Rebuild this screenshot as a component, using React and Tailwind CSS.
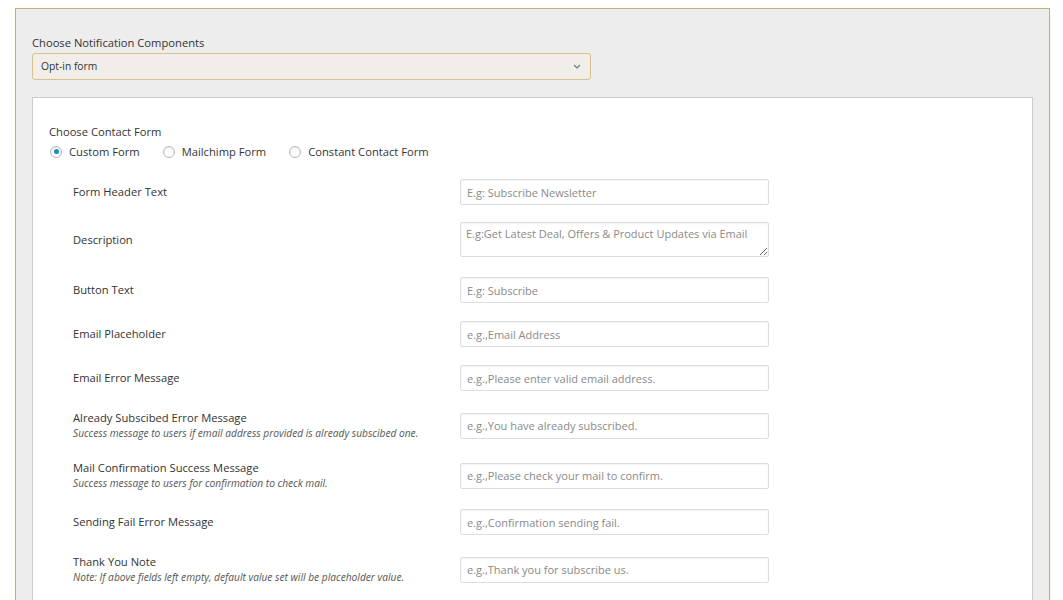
import React from "react";

const rows = [
  { label: "Form Header Text", placeholder: "E.g: Subscribe Newsletter", mt: "mt-[18px]" },
  { label: "Description", placeholder: "E.g:Get Latest Deal, Offers & Product Updates via Email", mt: "mt-[17px]", textarea: true },
  { label: "Button Text", placeholder: "E.g: Subscribe", mt: "mt-[20px]" },
  { label: "Email Placeholder", placeholder: "e.g.,Email Address", mt: "mt-[18px]" },
  { label: "Email Error Message", placeholder: "e.g.,Please enter valid email address.", mt: "mt-[18px]" },
  {
    label: "Already Subscibed Error Message",
    note: "Success message to users if email address provided is already subscibed one.",
    placeholder: "e.g.,You have already subscribed.",
    mt: "mt-[19px]",
  },
  {
    label: "Mail Confirmation Success Message",
    note: "Success message to users for confirmation to check mail.",
    placeholder: "e.g.,Please check your mail to confirm.",
    mt: "mt-[19px]",
  },
  { label: "Sending Fail Error Message", placeholder: "e.g.,Confirmation sending fail.", mt: "mt-[18px]" },
  {
    label: "Thank You Note",
    note: "Note: If above fields left empty, default value set will be placeholder value.",
    placeholder: "e.g.,Thank you for subscribe us.",
    mt: "mt-[19px]",
  },
];

function Radio({ checked, label }) {
  return (
    <label className="flex items-center gap-[7px]">
      <span className="flex h-[12px] w-[12px] items-center justify-center rounded-full border border-[#b4b9be] bg-white shadow-[inset_0_1px_2px_rgba(0,0,0,0.1)]">
        {checked && <span className="h-[5px] w-[5px] rounded-full bg-[#1e8cbe]" />}
      </span>
      <span>{label}</span>
    </label>
  );
}

export default function App() {
  return (
    <div className="min-h-[600px] bg-white pt-2 font-['Open_Sans',sans-serif] text-[#333]">
      <div className="ml-[15px] mr-[13px] border border-[#bfae82] bg-[#ededed] px-[16px] pt-[26px] shadow-[0_0_2px_#fff4d6]">
        {/* notification components */}
        <div className="text-[11.2px] leading-[16px]">Choose Notification Components</div>
        <div className="mt-[2px] flex h-[27px] w-[559px] items-center justify-between rounded-[3px] border border-[#d8c18c] bg-[#f1eee9] pl-[8px] pr-[9px] text-[10.3px]">
          <span>Opt-in form</span>
          <svg width="8" height="5" viewBox="0 0 8 5" fill="none">
            <path d="M1 1l3 3 3-3" stroke="#6b7a8a" strokeWidth="1.2" />
          </svg>
        </div>

        <div className="mt-[17px] border border-[#cccccc] bg-white pl-[16px] pt-[26px] pb-[20px] text-[11.2px]">
          <div className="leading-[16px]">Choose Contact Form</div>
          <div className="mt-[3px] flex h-[18px] items-center gap-[23px] pl-[1px]">
            <Radio checked label="Custom Form" />
            <Radio label="Mailchimp Form" />
            <Radio label="Constant Contact Form" />
          </div>

          <div className="pl-[24px]">
            {rows.map((row) => (
              <div key={row.label} className={`flex items-center ${row.mt}`}>
                <div className="w-[387px] shrink-0">
                  <div className="leading-[16px]">{row.label}</div>
                  {row.note && (
                    <div className="text-[10.2px] italic leading-[15px] text-[#555]">{row.note}</div>
                  )}
                </div>
                {row.textarea ? (
                  <textarea
                    placeholder={row.placeholder}
                    className="block h-[35px] w-[309px] rounded-[2px] border border-[#dddddd] px-[5px] py-[3px] text-[11px] leading-[15px] shadow-[inset_0_1px_2px_rgba(0,0,0,0.05)] outline-none placeholder:text-[#8a8a8a]"
                  />
                ) : (
                  <input
                    type="text"
                    placeholder={row.placeholder}
                    className="block h-[26px] w-[309px] rounded-[2px] border border-[#dddddd] px-[6px] text-[11px] shadow-[inset_0_1px_2px_rgba(0,0,0,0.05)] outline-none placeholder:text-[#8a8a8a]"
                  />
                )}
              </div>
            ))}
          </div>
        </div>
        <div className="h-[20px]" />
      </div>
    </div>
  );
}
